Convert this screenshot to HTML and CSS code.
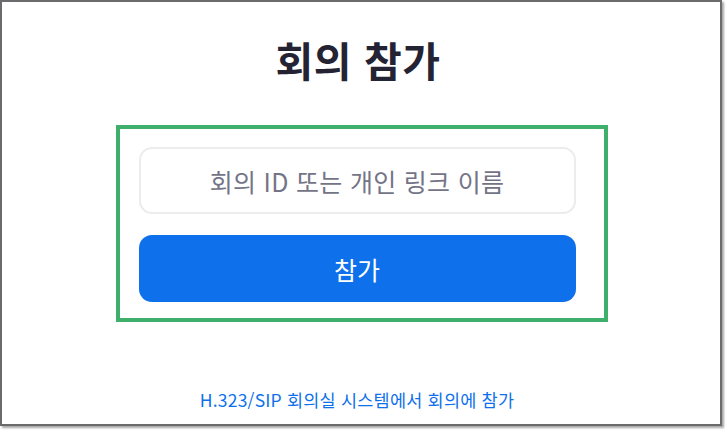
FILE: index.html
```html
<!DOCTYPE html>
<html lang="ko">
<head>
<meta charset="utf-8">
<link rel="stylesheet" href="styles.css">
</head>
<body>
<div class="frame">
  <h1 class="title">회의 참가</h1>
  <div class="highlight">
    <div class="input">회의 ID 또는 개인 링크 이름</div>
    <button class="join">참가</button>
  </div>
  <a class="link" href="#">H.323/SIP 회의실 시스템에서 회의에 참가</a>
</div>
</body>
</html>
```

FILE: styles.css
```css
html, body {
  margin: 0;
  padding: 0;
  background: #ffffff;
}
body {
  width: 728px;
  height: 432px;
  font-family: "Noto Sans CJK KR", "Noto Sans", sans-serif;
}
.frame {
  box-sizing: border-box;
  width: 722px;
  height: 426px;
  border: 2px solid #6b6b6e;
  box-shadow: 2px 2px 2px rgba(0,0,0,0.35);
  background: #fff;
  display: flex;
  flex-direction: column;
  align-items: center;
}
.title {
  margin: 33px 6px 0 0;
  height: 48px;
  font-size: 41px;
  font-weight: 700;
  line-height: 48px;
  color: #232333;
  letter-spacing: 0.5px;
}
.highlight {
  box-sizing: border-box;
  margin-top: 42px;
  margin-left: 1px;
  width: 492px;
  height: 197px;
  border: 4px solid #3eb06b;
  padding: 18px 28px 0 19px;
  display: flex;
  flex-direction: column;
  gap: 21px;
}
.input {
  box-sizing: border-box;
  height: 67px;
  border: 2px solid #ececee;
  border-radius: 13px;
  display: flex;
  align-items: center;
  justify-content: center;
  font-size: 25px;
  letter-spacing: 0.3px;
  color: #747487;
}
.join {
  height: 67px;
  border: none;
  border-radius: 13px;
  background: #0e71eb;
  color: #fff;
  font-family: inherit;
  font-size: 25px;
  padding: 0;
}
.link {
  margin-top: 66px;
  font-size: 17.5px;
  line-height: 24px;
  letter-spacing: 0.2px;
  color: #0e71eb;
  text-decoration: none;
  margin-right: 8px;
}
```
